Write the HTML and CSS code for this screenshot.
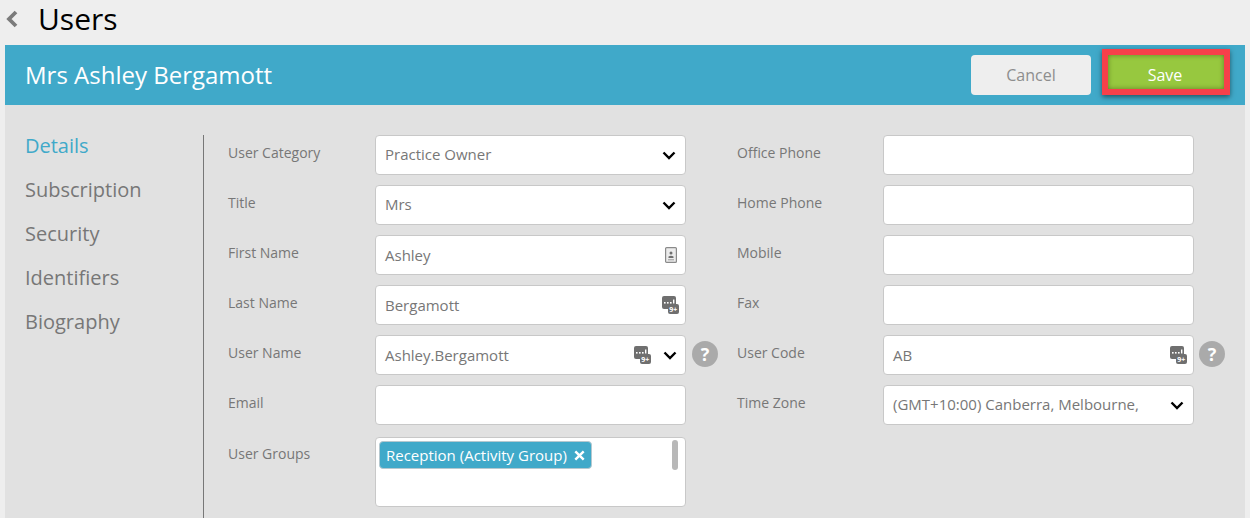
FILE: index.html
```html
<!DOCTYPE html>
<html lang="en">
<head>
<meta charset="utf-8">
<title>Users</title>
<link rel="stylesheet" href="styles.css">
</head>
<body>
<svg class="defs" width="0" height="0" aria-hidden="true">
  <symbol id="chev" viewBox="0 0 14 9">
    <path d="M1.5 1.5 7 7l5.5-5.5" fill="none" stroke="#000" stroke-width="2.4"/>
  </symbol>
  <symbol id="genbase" viewBox="0 0 17 18">
    <rect x="0" y="0" width="14" height="13" rx="2" fill="#6f6f6f"/>
    <rect x="2" y="6" width="1.6" height="1.6" fill="#fff"/>
    <rect x="5" y="6" width="1.6" height="1.6" fill="#fff"/>
    <rect x="8" y="6" width="1.6" height="1.6" fill="#fff"/>
    <rect x="11" y="3.5" width="1.4" height="4" fill="#fff"/>
    <rect x="6" y="8" width="11" height="10" rx="2" fill="#6f6f6f"/>
  </symbol>
</svg>
<header class="top">
  <svg class="back" width="12" height="18" viewBox="0 0 12 18"><path d="M10 2 3 9l7 7" fill="none" stroke="#7b7b7b" stroke-width="3.800"/></svg>
  <h1 class="page-title">Users</h1>
</header>
<main class="panel">
  <div class="bar">
    <h2 class="person">Mrs Ashley Bergamott</h2>
    <div class="actions">
      <button class="btn cancel">Cancel</button>
      <button class="btn save">Save</button>
    </div>
  </div>
  <div class="content">
    <nav class="side">
      <a class="side-item active">Details</a>
      <a class="side-item">Subscription</a>
      <a class="side-item">Security</a>
      <a class="side-item">Identifiers</a>
      <a class="side-item">Biography</a>
    </nav>
    <div class="form">
      <div class="col">
        <div class="row"><label class="lbl">User Category</label><div class="field"><span class="val val-sel">Practice Owner</span><svg class="chev"><use href="#chev"/></svg></div></div>
        <div class="row"><label class="lbl">Title</label><div class="field"><span class="val val-sel">Mrs</span><svg class="chev"><use href="#chev"/></svg></div></div>
        <div class="row"><label class="lbl">First Name</label><div class="field"><span class="val">Ashley</span>
          <svg class="contact" width="12" height="16" viewBox="0 0 12 16"><rect x=".6" y=".6" width="10.800" height="14.800" rx="1" fill="#ececec" stroke="#8a8a8a" stroke-width="1.2"/><circle cx="6" cy="6" r="1.500" fill="#6f6f6f"/><path d="M3.500 11V9.500q2.500-1.700 5 0V11z" fill="#6f6f6f"/><path d="M3 12.800h6" stroke="#9a9a9a"/></svg></div></div>
        <div class="row"><label class="lbl">Last Name</label><div class="field"><span class="val">Bergamott</span><svg class="gen" viewBox="0 0 17 18"><use href="#genbase"/><text x="7.200" y="15.600" class="gen-text">9+</text></svg></div></div>
        <div class="row"><label class="lbl">User Name</label><div class="field"><span class="val">Ashley.Bergamott</span><svg class="gen gen-mid" viewBox="0 0 17 18"><use href="#genbase"/><text x="7.200" y="15.600" class="gen-text">9+</text></svg><svg class="chev"><use href="#chev"/></svg><span class="help">?</span></div></div>
        <div class="row"><label class="lbl">Email</label><div class="field"></div></div>
        <div class="row row-tall"><label class="lbl lbl-groups">User Groups</label><div class="field field-tall"><span class="tag">Reception (Activity Group)<svg class="tag-x" width="11" height="11" viewBox="0 0 11 11"><path d="M1.300 1.300l8.400 8.400M9.700 1.300 1.300 9.700" stroke="#fff" stroke-width="2.400"/></svg></span><span class="thumb"></span></div></div>
      </div>
      <div class="col col-right">
        <div class="row"><label class="lbl">Office Phone</label><div class="field"></div></div>
        <div class="row"><label class="lbl">Home Phone</label><div class="field"></div></div>
        <div class="row"><label class="lbl">Mobile</label><div class="field"></div></div>
        <div class="row"><label class="lbl">Fax</label><div class="field"></div></div>
        <div class="row"><label class="lbl">User Code</label><div class="field"><span class="val">AB</span><svg class="gen" viewBox="0 0 17 18"><use href="#genbase"/><text x="7.200" y="15.600" class="gen-text">9+</text></svg><span class="help help-right">?</span></div></div>
        <div class="row"><label class="lbl">Time Zone</label><div class="field"><span class="val val-sel">(GMT+10:00) Canberra, Melbourne,</span><svg class="chev"><use href="#chev"/></svg></div></div>
      </div>
    </div>
  </div>
</main>
</body>
</html>
```
FILE: styles.css
```css
* { box-sizing: border-box; }
html, body { margin: 0; height: 518px; overflow: hidden; }
body { background: #eeeeee; font-family: "Open Sans", sans-serif; color: #777; }
.defs { position: absolute; }
.top { height: 45px; display: flex; align-items: center; padding-left: 6px; padding-bottom: 7px; }
.back { margin-right: 20px; }
.page-title { margin: 0; font-size: 30px; font-weight: 400; color: #000; line-height: 38px; }
.panel { margin: 0 5px; background: #e1e1e1; height: 473px; }
.bar { height: 60px; background: #40a9c9; display: flex; align-items: center; justify-content: space-between; padding: 0 15px 0 20px; }
.person { margin: 0; font-size: 24px; font-weight: 400; color: #fff; line-height: 32px; }
.actions { display: flex; align-items: flex-end; gap: 11px; margin-bottom: 6px; }
.btn { font-family: inherit; font-size: 16px; border: 0; border-radius: 4px; height: 40px; padding: 0; }
.cancel { width: 120px; background: #eeeeee; color: #8d8d8d; }
.save { width: 128px; height: 46px; background: #97c83f; color: #fff; border: 6px solid #f6404a; border-radius: 0; padding: 6px 2px 0 0; box-shadow: 0 2px 5px rgba(0,0,0,.5), inset 0 0 5px rgba(60,80,20,.6); }
.content { display: flex; padding: 30px 0 0 20px; height: 413px; }
.side { width: 178px; flex: none; display: flex; flex-direction: column; gap: 14px; margin-top: -4px; }
.side-item { font-size: 20px; line-height: 30px; color: #777; }
.side-item.active { color: #40a9c9; }
.form { border-left: 1px solid #777; padding-left: 24px; display: flex; flex: 1; gap: 51px; height: 383px; }
.col { display: flex; flex-direction: column; gap: 10px; width: 458px; }
.col-right { width: 457px; }
.row { display: flex; align-items: flex-start; height: 40px; }
.row-tall { height: 70px; margin-top: 2px; }
.lbl { width: 147px; flex: none; font-size: 14px; line-height: 19px; padding-top: 8px; color: #777; }
.lbl-groups { padding-top: 7px; }
.col-right .lbl { width: 146px; }
.field { position: relative; width: 311px; height: 40px; flex: none; background: #fff; border: 1px solid #c8c8c8; border-radius: 4px; display: flex; align-items: center; padding: 0 9px; }
.field-tall { height: 70px; align-items: flex-start; padding: 3px; }
.val { flex: 1; font-size: 15px; line-height: 20px; color: #777; white-space: nowrap; }
.val-sel { margin-top: -2px; }
.chev { width: 14px; height: 9px; margin-right: -1px; flex: none; }
.val + .chev { margin-right: 0; }
.gen { width: 17px; height: 18px; flex: none; margin-right: -3px; }
.gen-mid { margin-right: 12px; }
.gen-text { font-family: "Open Sans", sans-serif; font-size: 7px; font-weight: 700; fill: #fff; }
.contact { flex: none; margin-right: -1px; }
.help { position: absolute; left: 316px; top: 5px; width: 26px; height: 26px; border-radius: 50%; background: #aaaaaa; color: #fff; font-size: 18px; font-weight: 700; line-height: 26px; text-align: center; }
.help-right { left: 315px; }
.tag { display: inline-flex; align-items: center; height: 28px; padding: 0 6px; background: #40a9c9; border: 1px solid #b5c8cf; border-radius: 4px; color: #fff; font-size: 15px; line-height: 20px; white-space: nowrap; }
.tag-x { margin-left: 7px; }
.thumb { position: absolute; right: 7px; top: 2px; width: 6px; height: 30px; border-radius: 3px; background: #b8b8b8; }
```
